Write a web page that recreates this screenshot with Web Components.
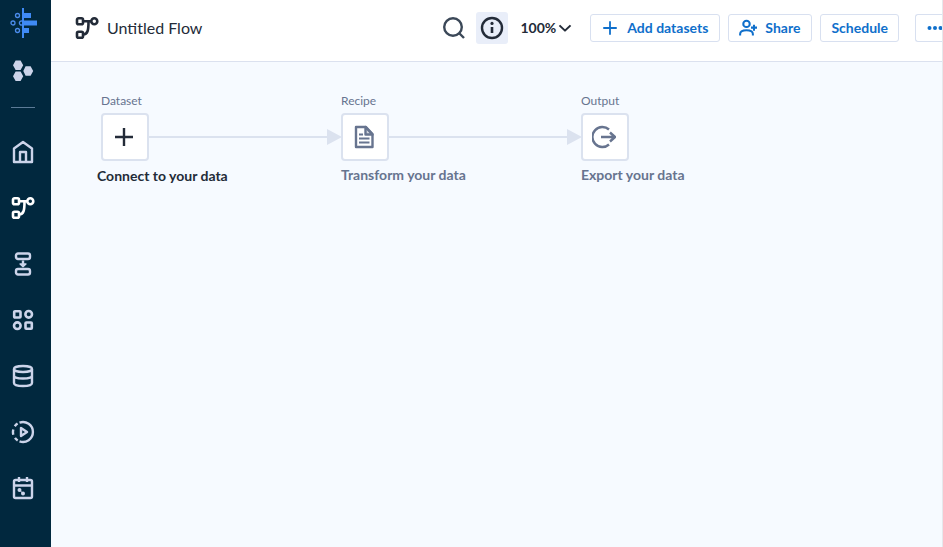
<!DOCTYPE html>
<html lang="en">
<head>
<meta charset="utf-8">
<title>Untitled Flow</title>
<style>
  html, body { height: 100%; margin: 0; }
  body { font-family: Lato, "Open Sans", sans-serif; font-size: 14px; color: #23303f; background: #f6faff; overflow: hidden; }
</style>
</head>
<body>
<flow-app></flow-app>
<script>
const ICONS = {
  logo: `<g fill="#3f8af5" stroke="none"><path d="M13 0h2v30h-2zM15 5h7v5h-7zM15 12.500h13v5h-13zM15 20h5v5h-5z"/></g><g stroke="#4b8bea" stroke-width="1.300"><circle cx="8.500" cy="7.500" r="2"/><circle cx="4" cy="15" r="2"/><path d="M13 13.100a2 2 0 1 0 0 3.800"/><circle cx="8.500" cy="22.500" r="2"/></g>`,
  hex: `<g fill="currentColor" stroke="none"><path d="M4.600 1.500h5l2.600 4.800-2.600 4.800h-5L2 6.300zM4.600 12.500h5l2.600 4.800-2.600 4.800h-5L2 17.300zM14.600 7.200h5L22.200 12l-2.600 4.800h-5L12.300 12z"/></g>`,
  home: `<path d="M3 8.500 12 2l9 6.500V22H3zM9 22V12h6v10"/>`,
  flow: `<g stroke-width="2.600"><rect x="2" y="2.300" width="6" height="6" rx="1.500"/><rect x="2" y="15.700" width="6" height="6" rx="1.500"/><circle cx="19.300" cy="5.300" r="3"/><path d="M8 5.300h8M13.500 5.500c0 8-.5 13-5.500 13"/></g>`,
  steps: `<rect x="5" y="1.500" width="14" height="5.500" rx="2"/><rect x="5" y="17" width="14" height="5.500" rx="2"/><path d="M12 8.500v4"/><path d="M9 12h6l-3 2.800z" fill="currentColor" stroke-width="1.300"/>`,
  grid: `<g stroke-width="2.600"><rect x="3.200" y="3.200" width="6.300" height="6.300" rx=".8"/><circle cx="17.700" cy="6.300" r="3.300"/><circle cx="6.300" cy="17.700" r="3.300"/><rect x="14.500" y="14.500" width="6.300" height="6.300" rx=".8"/></g>`,
  database: `<ellipse cx="12" cy="5" rx="9" ry="3"/><path d="M3 5v14c0 4 18 4 18 0V5M3 11.500c0 4 18 4 18 0"/>`,
  play: `<path d="M8.500 2.600a10 10 0 1 1 0 18.800M6.700 20.500a10 10 0 0 1-2.700-2.600M2.300 14.700a10 10 0 0 1 0-5.200M3.800 6.200a10 10 0 0 1 2.800-2.700M10 8v8l6-4z"/>`,
  calendar: `<rect x="3" y="4" width="18" height="18" rx="1.500"/><path d="M3 9.500h18M8 1v5M16 1v5"/><g fill="currentColor" stroke="none"><circle cx="8.500" cy="14" r="2"/><circle cx="12" cy="17.500" r="2"/></g><path d="M8.500 14l3.500 3.500" stroke-width="1"/>`,
  search: `<circle cx="11" cy="11" r="8.800"/><path d="m17 17 5 5"/>`,
  info: `<circle cx="12" cy="12" r="10"/><path d="M12 11v6" stroke-width="2.600"/><circle cx="12" cy="7.400" r="1.600" fill="currentColor" stroke="none"/>`,
  chevron: `<path d="m2.500 7.500 9.500 9 9.500-9" stroke-width="3.500"/>`,
  plus: `<path d="M12 3v18M3 12h18"/>`,
  share: `<g stroke-width="2.700"><circle cx="10" cy="6.500" r="4.300"/><path d="M1.500 22v-2c0-6.500 17-6.500 17 0v2M20 7.500v8M16 11.500h8"/></g>`,
  dots: `<g fill="currentColor" stroke="none"><circle cx="2.500" cy="12" r="2"/><circle cx="8" cy="12" r="2"/><circle cx="13.500" cy="12" r="2"/></g>`,
  doc: `<path d="M4 2h10l6.500 7v13H4z"/><path d="M13.500 2v7.500H20.500z" fill="currentColor" fill-opacity=".3"/><path d="M7 9.500h4M7 13.500h10.500M7 17.500h10.500" stroke-width="2"/>`,
  output: `<path d="M17 4.500a10 10 0 1 0 0 15M9 12h13M18 7.500l5 4.500-5 4.500"/>`
};
const define = (name, html, setup) => {
  const t = document.createElement('template');
  t.innerHTML = html;
  customElements.define(name, class extends HTMLElement {
    constructor() {
      super();
      this.attachShadow({ mode: 'open' }).append(t.content.cloneNode(true));
    }
    connectedCallback() { if (setup) setup(this, this.shadowRoot); }
  });
};

define('ui-icon', `<style>
  :host { display: block; flex: none; width: var(--icon-w, 24px); height: var(--icon-h, 24px); }
  svg { display: block; width: 100%; height: 100%; fill: none; stroke: currentColor; stroke-width: 2.4; stroke-linejoin: round; }
</style><svg viewBox="0 0 24 24" aria-hidden="true"></svg>`, (el, root) => {
  const name = el.getAttribute('name');
  const svg = root.querySelector('svg');
  if (name === 'logo') svg.setAttribute('viewBox', '0 0 28 30');
  svg.innerHTML = ICONS[name] || '';
});

define('nav-link', `<style>
  :host { display: block; color: #ccd4ea; }
  :host([active]) { color: #fff; }
  a { display: flex; align-items: center; justify-content: center; height: 56px; color: inherit; }
</style><a href="#"></a>`, (el, root) => {
  const link = root.querySelector('a');
  link.innerHTML = `<ui-icon name="${el.getAttribute('icon')}"></ui-icon>`;
  link.setAttribute('aria-label', el.getAttribute('label'));
});

define('side-nav', `<style>
  :host { display: flex; flex-direction: column; box-sizing: border-box; width: 51px; flex: none; padding-right: 5px; background: #01283e; }
  .brand { display: flex; align-items: center; justify-content: center; height: 46px; --icon-w: 28px; --icon-h: 30px; }
  .apps { margin-top: -3px; }
  hr { width: 24px; height: 1px; border: 0; margin: 8px auto 16px; background: #5c7b97; }
</style>
<a class="brand" href="#" aria-label="Start"><ui-icon name="logo"></ui-icon></a>
<nav-link class="apps" icon="hex" label="Apps"></nav-link>
<hr>
<nav-link icon="home" label="Home"></nav-link>
<nav-link icon="flow" label="Flows" active></nav-link>
<nav-link icon="steps" label="Plans"></nav-link>
<nav-link icon="grid" label="Library"></nav-link>
<nav-link icon="database" label="Data"></nav-link>
<nav-link icon="play" label="Jobs"></nav-link>
<nav-link icon="calendar" label="Schedules"></nav-link>`);

define('action-button', `<style>
  :host { display: block; flex: none; }
  button { display: flex; align-items: center; gap: 8px; box-sizing: border-box; height: 28px; margin: 0; padding: 0 10px; border: 1px solid #d8e0f0; border-radius: 3px; background: #fff; color: #0f6fcb; font: bold 14px/20px Lato, "Open Sans", sans-serif; white-space: nowrap; --icon-w: 18px; --icon-h: 18px; }
  :host([with-icon]) button { padding-right: 11px; }
  :host([cut]) button { width: 27px; padding: 0 0 0 11px; border-right: 0; border-radius: 3px 0 0 3px; overflow: hidden; --icon-w: 24px; --icon-h: 24px; }
</style><button type="button"><slot></slot></button>`, (el, root) => {
  if (el.getAttribute('label')) root.querySelector('button').setAttribute('aria-label', el.getAttribute('label'));
});

define('tool-button', `<style>
  :host { display: block; flex: none; color: #3b4858; }
  button { display: flex; align-items: center; justify-content: center; width: 32px; height: 32px; margin: 0; padding: 0; border: 0; border-radius: 3px; background: transparent; color: inherit; }
  :host([active]) { color: #232b38; }
  :host([active]) button { background: #e9eef9; }
</style><button type="button"><slot></slot></button>`, (el, root) => {
  root.querySelector('button').setAttribute('aria-label', el.getAttribute('label'));
});

define('flow-header', `<style>
  :host { display: flex; align-items: center; box-sizing: border-box; height: 62px; padding: 0 0 6px 24px; background: #fff; border-bottom: 1px solid #dbe1ef; color: #232b38; }
  h1 { flex: 1; margin: 0 0 0 8px; font-size: 16px; line-height: 24px; font-weight: normal; white-space: nowrap; }
  .tools, .actions { display: flex; align-items: center; }
  .tools { gap: 6px; }
  .actions { gap: 8px; margin-left: 18px; }
  .zoom { display: flex; align-items: center; gap: 2px; margin: 0 0 0 6px; padding: 0; border: 0; background: none; color: inherit; font: bold 14px/20px Lato, "Open Sans", sans-serif; --icon-w: 14px; --icon-h: 14px; }
  .more { margin-left: 8px; }
</style>
<ui-icon name="flow"></ui-icon>
<h1>Untitled Flow</h1>
<div class="tools">
  <tool-button label="Search"><ui-icon name="search"></ui-icon></tool-button>
  <tool-button label="Details" active><ui-icon name="info"></ui-icon></tool-button>
  <button class="zoom" type="button">100%<ui-icon name="chevron"></ui-icon></button>
</div>
<div class="actions">
  <action-button with-icon><ui-icon name="plus"></ui-icon>Add datasets</action-button>
  <action-button with-icon><ui-icon name="share"></ui-icon>Share</action-button>
  <action-button>Schedule</action-button>
  <action-button class="more" cut label="More"><ui-icon name="dots"></ui-icon></action-button>
</div>`);

define('flow-step', `<style>
  :host { display: flex; flex-direction: column; align-items: flex-start; width: 48px; flex: none; color: #67748f; white-space: nowrap; }
  .kind { font-size: 12px; line-height: 16px; margin-bottom: 4px; }
  button { display: flex; align-items: center; justify-content: center; box-sizing: border-box; width: 48px; height: 48px; padding: 0 2px 0 0; margin: 0 0 4px; border: 2px solid #dbe2ef; border-radius: 4px; background: #fff; color: inherit; }
  :host([active]) button { color: #232b38; }
  .action { font-size: 14px; line-height: 20px; font-weight: bold; }
  :host([active]) .action { color: #232b38; margin: 1px 0 0 -4px; }
</style>
<span class="kind"><slot name="kind"></slot></span>
<button type="button"><slot name="icon"></slot></button>
<span class="action"><slot></slot></span>`, (el, root) => {
  root.querySelector('button').setAttribute('aria-label', el.lastChild.textContent.trim());
});

define('flow-arrow', `<style>
  :host { display: flex; align-items: center; width: 192px; height: 48px; margin-top: 20px; color: #dbe2ef; }
  i { flex: 1; height: 2px; background: currentColor; }
  b { width: 15px; height: 16px; margin-right: -1px; background: currentColor; clip-path: polygon(0 0, 100% 50%, 0 100%); }
</style><i></i><b></b>`);

define('flow-canvas', `<style>
  :host { display: flex; align-items: flex-start; flex: 1; padding: 31px 50px; background: #f6faff; }
</style>
<flow-step active><span slot="kind">Dataset</span><ui-icon slot="icon" name="plus"></ui-icon>Connect to your data</flow-step>
<flow-arrow></flow-arrow>
<flow-step><span slot="kind">Recipe</span><ui-icon slot="icon" name="doc"></ui-icon>Transform your data</flow-step>
<flow-arrow></flow-arrow>
<flow-step><span slot="kind">Output</span><ui-icon slot="icon" name="output"></ui-icon>Export your data</flow-step>`);

define('flow-app', `<style>
  :host { display: flex; min-height: 100vh; }
  main { display: flex; flex-direction: column; flex: 1; min-width: 0; border-right: 1px solid #e6e8ec; }
</style>
<side-nav></side-nav>
<main><flow-header></flow-header><flow-canvas></flow-canvas></main>`);
</script>
</body>
</html>
